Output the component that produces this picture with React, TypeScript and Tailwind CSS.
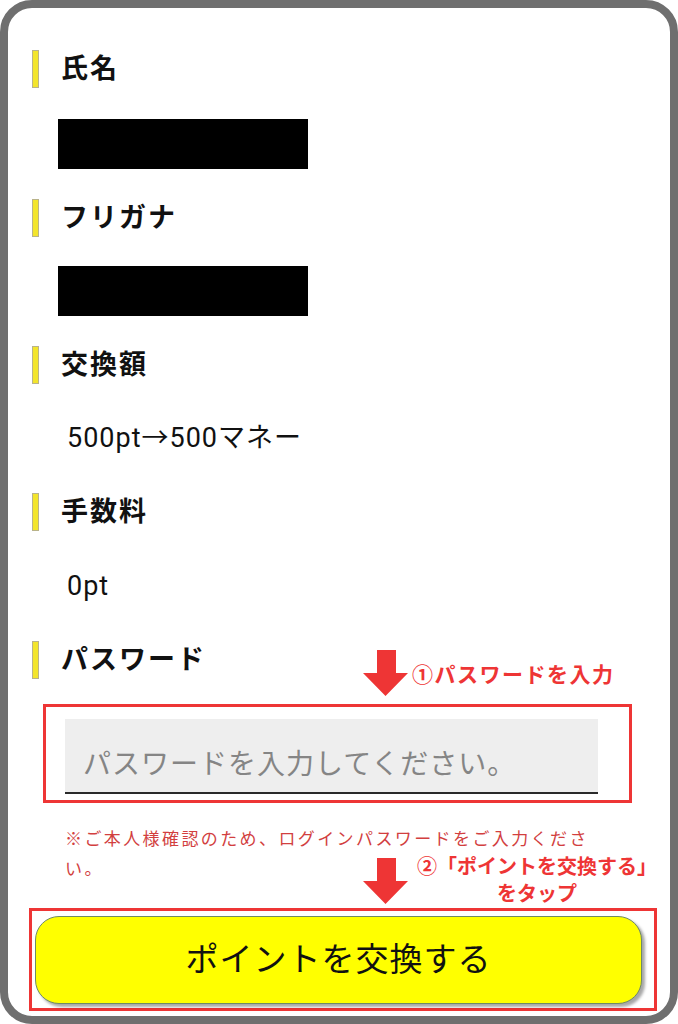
const font = "font-['Roboto','Noto_Sans_CJK_JP',sans-serif]";

function Label({ text }: { text: string }) {
  return (
    <div className="flex h-[38px] items-center">
      <div className="h-[38px] w-[7px] border border-[#b9b38a] bg-[#f3e52c]" />
      <span className="ml-[22px] text-[27px] font-bold tracking-[2px] text-[#111]">{text}</span>
    </div>
  );
}

function DownArrow() {
  return (
    <svg width="45" height="46" viewBox="0 0 45 46">
      <polygon points="14,0 33,0 33,23 45,23 22.5,46 0,23 14,23" fill="#ee3535" />
    </svg>
  );
}

export default function App() {
  return (
    <div className={`${font} bg-white`}>
      <div className="relative h-[1024px] w-[678px] rounded-[32px] border-[8px] border-[#6f6f6f] bg-white pl-6">
        {/* 氏名 */}
        <div className="pt-[42px]">
          <Label text="氏名" />
          <div className="ml-[26px] mt-[31px] h-[50px] w-[250px] bg-black" />
        </div>

        {/* フリガナ */}
        <div className="pt-[30px]">
          <Label text="フリガナ" />
          <div className="ml-[26px] mt-[29px] h-[50px] w-[250px] bg-black" />
        </div>

        {/* 交換額 */}
        <div className="pt-[30px]">
          <Label text="交換額" />
          <div className="ml-[35px] mt-[34px] h-[40px] text-[27px] leading-[40px] tracking-[1px] text-[#111]">
            500pt→500マネー
          </div>
        </div>

        {/* 手数料 */}
        <div className="pt-[35px]">
          <Label text="手数料" />
          <div className="ml-[35px] mt-[35px] h-[40px] text-[27px] leading-[40px] tracking-[1px] text-[#111]">
            0pt
          </div>
        </div>

        {/* パスワード */}
        <div className="pt-[35px]">
          <Label text="パスワード" />
          <div className="ml-[11px] mt-[25px] h-[99px] w-[589px] border-[3px] border-[#ee3535]">
            <div className="ml-[19px] mt-[12px] flex h-[75px] w-[533px] items-center border-b-2 border-[#2a2a2a] bg-[#eeeeee] pl-[18px] pt-[18px]">
              <span className="text-[28px] tracking-[1px] text-[#858585]">パスワードを入力してください。</span>
            </div>
          </div>
          <div className="ml-[33px] mt-[21px] text-[17px] leading-[30px] tracking-[2.4px] text-[#d23f3f]">
            <div>※ご本人様確認のため、ログインパスワードをご入力くださ</div>
            <div className="w-fit">い。</div>
          </div>
        </div>

        {/* ボタン */}
        <div className="-ml-[3px] mt-[24px] h-[103px] w-[628px] border-[3px] border-[#ee3535] pl-[3px] pt-[5px]">
          <button className="flex h-[88px] w-[607px] items-center justify-center rounded-[24px] border border-[#6f8a64] bg-[#ffff00] text-[33px] tracking-[1px] text-[#111] shadow-[3px_3px_3px_rgba(0,0,0,0.35)]">
            ポイントを交換する
          </button>
        </div>

        {/* 注釈 ① */}
        <div className="absolute left-[355px] top-[642px]">
          <DownArrow />
        </div>
        <div className="absolute left-[404px] top-[654px] text-[21px] font-bold leading-[26px] tracking-[1.5px] text-[#ee3535]">
          ①パスワードを入力
        </div>

        {/* 注釈 ② */}
        <div className="absolute left-[355px] top-[850px]">
          <DownArrow />
        </div>
        <div className="absolute left-[404px] top-[846px] w-[250px] text-center text-[20px] font-bold leading-[27px] text-[#ee3535]">
          <div>②「ポイントを交換する」</div>
          <div>をタップ</div>
        </div>
      </div>
    </div>
  );
}
